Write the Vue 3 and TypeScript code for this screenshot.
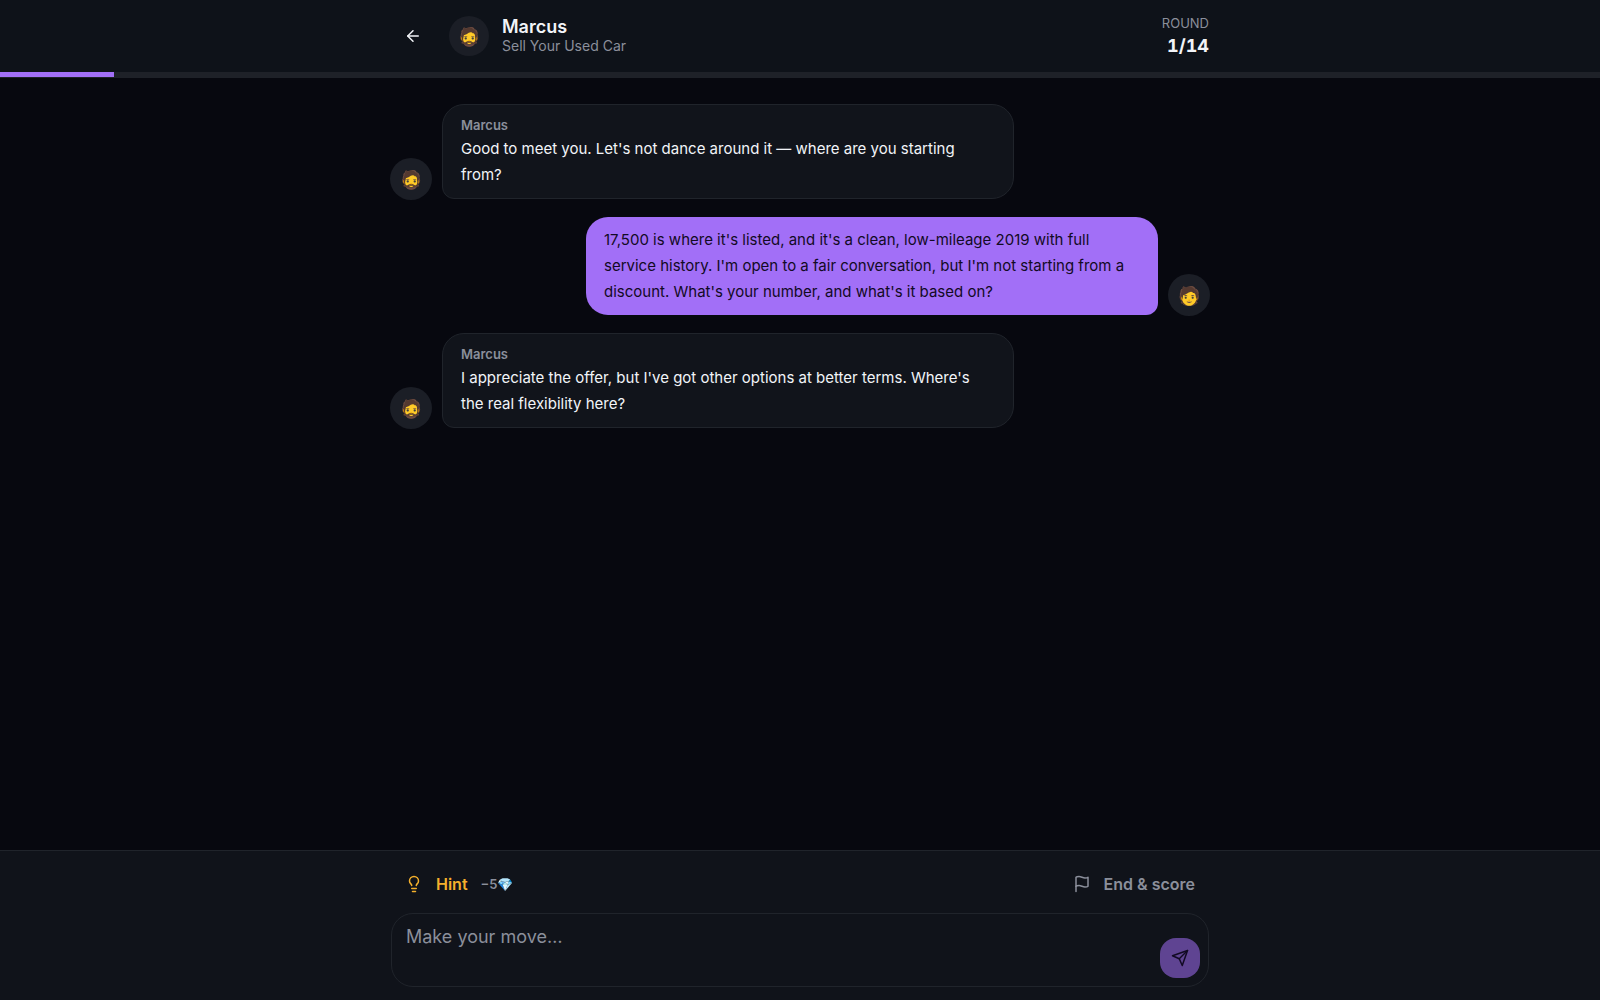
<script setup lang="ts">
import { computed, ref } from 'vue'

interface Message {
  id: number
  from: 'them' | 'me'
  text: string
}

const opponent = { name: 'Marcus', face: '🧔', scenario: 'Sell Your Used Car' }
const round = ref(1)
const totalRounds = 14
const draft = ref('')

const messages = ref<Message[]>([
  { id: 1, from: 'them', text: "Good to meet you. Let's not dance around it — where are you starting from?" },
  {
    id: 2,
    from: 'me',
    text: "17,500 is where it's listed, and it's a clean, low-mileage 2019 with full service history. I'm open to a fair conversation, but I'm not starting from a discount. What's your number, and what's it based on?",
  },
  { id: 3, from: 'them', text: "I appreciate the offer, but I've got other options at better terms. Where's the real flexibility here?" },
])

const progress = computed(() => `${(round.value / totalRounds) * 100}%`)

function send() {
  const text = draft.value.trim()
  if (!text) return
  messages.value.push({ id: messages.value.length + 1, from: 'me', text })
  draft.value = ''
}
</script>

<template>
  <div class="app">
    <header class="top">
      <div class="top-row">
        <button class="back" type="button" aria-label="Back">
          <svg class="icon" viewBox="0 0 24 24"><path d="m12 19-7-7 7-7" /><path d="M19 12H5" /></svg>
        </button>
        <span class="face">{{ opponent.face }}</span>
        <div class="who">
          <h1>{{ opponent.name }}</h1>
          <p>{{ opponent.scenario }}</p>
        </div>
        <div class="round">
          <span class="round-label">ROUND</span>
          <span class="round-value">{{ round }}/{{ totalRounds }}</span>
        </div>
      </div>
      <div class="track"><div class="fill" :style="{ width: progress }"></div></div>
    </header>

    <main class="chat">
      <div v-for="m in messages" :key="m.id" class="message" :class="m.from">
        <span class="avatar">{{ m.from === 'them' ? opponent.face : '🧑' }}</span>
        <div class="bubble">
          <div v-if="m.from === 'them'" class="sender">{{ opponent.name }}</div>
          <p>{{ m.text }}</p>
        </div>
      </div>
    </main>

    <footer class="bottom">
      <form class="composer" @submit.prevent="send">
        <div class="actions">
          <button class="action hint" type="button">
            <svg class="icon" viewBox="0 0 24 24">
              <path d="M15 14c.2-1 .7-1.7 1.5-2.5 1-.9 1.5-2.2 1.5-3.5A6 6 0 0 0 6 8c0 1 .2 2.2 1.5 3.5.7.7 1.3 1.5 1.5 2.5" />
              <path d="M9 18h6" /><path d="M10 22h4" />
            </svg>
            <span>Hint</span>
            <span class="cost">−5💎</span>
          </button>
          <button class="action" type="button">
            <svg class="icon" viewBox="0 0 24 24">
              <path d="M4 15s1-1 4-1 5 2 8 2 4-1 4-1V3s-1 1-4 1-5-2-8-2-4 1-4 1z" /><path d="M4 22v-7" />
            </svg>
            <span>End &amp; score</span>
          </button>
        </div>
        <div class="field">
          <textarea v-model="draft" rows="2" aria-label="Your move" placeholder="Make your move…"></textarea>
          <button class="send" type="submit" aria-label="Send" :disabled="!draft.trim()">
            <svg class="icon" viewBox="0 0 24 24"><path d="m22 2-7 20-4-9-9-4Z" /><path d="M22 2 11 13" /></svg>
          </button>
        </div>
      </form>
    </footer>
  </div>
</template>

<style>
body {
  background: #07080f;
}
</style>

<style scoped>
.app {
  display: flex;
  flex-direction: column;
  min-height: 100vh;
  background: #07080f;
  color: #f2f4f8;
  font-family: Inter, sans-serif;
  font-size: 16px;
}
.app *,
.app {
  box-sizing: border-box;
}
h1,
p {
  margin: 0;
}
button {
  border: 0;
  padding: 0;
  background: none;
  color: inherit;
  font: inherit;
  cursor: pointer;
}
svg {
  fill: none;
  stroke: currentColor;
  stroke-width: 2;
  stroke-linecap: round;
  stroke-linejoin: round;
}
.top {
  background: #0e1219;
  border-bottom: 1px solid #1e2128;
}
.top-row {
  display: flex;
  align-items: center;
  width: 100%;
  max-width: 818px;
  height: 72px;
  margin: 0 auto;
}
.back {
  display: grid;
  place-items: center;
  width: 44px;
  height: 44px;
}
.face,
.avatar {
  display: grid;
  place-items: center;
  flex: none;
  border-radius: 50%;
  background: #1b1e26;
}
.face {
  width: 40px;
  height: 40px;
  margin: 0 13px 0 14px;
  font-size: 18px;
}
.who {
  flex: 1;
}
h1 {
  font-size: 18px;
  line-height: 20px;
  font-weight: 600;
}
.who p {
  color: #8b8f9b;
  font-size: 14px;
  line-height: 18px;
}
.round {
  display: flex;
  flex-direction: column;
  align-items: flex-end;
}
.round-label {
  color: #8b8f9b;
  font-size: 13px;
  line-height: 20px;
}
.round-value {
  font-size: 18px;
  line-height: 26px;
  font-weight: 700;
  font-variant-numeric: tabular-nums;
}
.track {
  height: 5px;
  background: #1e2128;
}
.fill {
  height: 100%;
  background: #a26ff7;
}
.chat {
  display: flex;
  flex: 1;
  flex-direction: column;
  gap: 17px;
  width: 100%;
  max-width: 820px;
  margin: 0 auto;
  padding: 26px 0;
}
.message {
  display: flex;
  align-items: flex-end;
  gap: 10px;
}
.message.me {
  flex-direction: row-reverse;
}
.avatar {
  width: 42px;
  height: 42px;
  font-size: 18px;
}
.bubble {
  width: 70%;
  max-width: 572px;
  margin-bottom: 1px;
  padding: 10px 18px;
  border: 1px solid #20242b;
  border-radius: 22px 22px 22px 12px;
  background: #11141b;
  font-size: 15px;
  line-height: 26px;
}
.me .bubble {
  border: 0;
  border-radius: 22px 22px 12px 22px;
  background: #a26ff7;
  color: #120a24;
}
.sender {
  color: #8b8f9b;
  font-size: 13px;
  line-height: 21px;
  font-weight: 600;
}
.bottom {
  padding: 11px 0 13px;
  border-top: 1px solid #20242b;
  background: #10131a;
}
.composer {
  width: 100%;
  max-width: 818px;
  margin: 0 auto;
}
.actions {
  display: flex;
  justify-content: space-between;
  margin-bottom: 7px;
}
.action {
  display: flex;
  align-items: center;
  gap: 13px;
  height: 44px;
  padding: 0 14px;
  color: #8b8f9b;
  font-weight: 600;
}
.hint {
  color: #f4b02c;
}
.cost {
  color: #8b8f9b;
  font-size: 13px;
}
.icon {
  width: 18px;
  height: 18px;
}
.field {
  display: flex;
  align-items: flex-end;
  padding: 8px;
  border: 1px solid #20242b;
  border-radius: 22px;
}
textarea {
  flex: 1;
  height: 56px;
  border: 0;
  padding: 0 6px;
  background: none;
  outline: none;
  resize: none;
  color: inherit;
  font: inherit;
  font-size: 18px;
  line-height: 30px;
}
textarea::placeholder {
  color: #8b8f9b;
}
.send {
  display: grid;
  place-items: center;
  width: 40px;
  height: 40px;
  border-radius: 16px;
  background: #5f4492;
  color: #120a24;
}
</style>
